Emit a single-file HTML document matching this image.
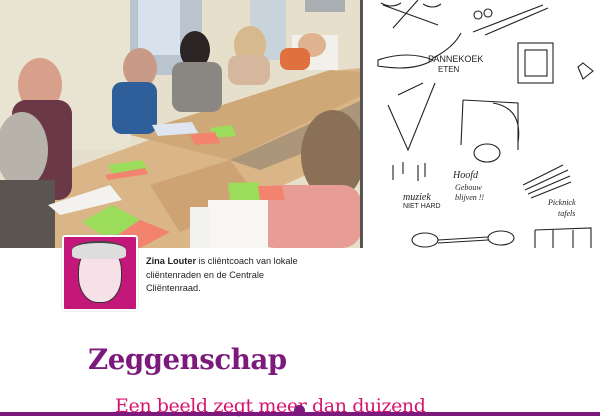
<!DOCTYPE html>
<html><head><meta charset="utf-8"><style>
body{margin:0;width:600px;height:416px;overflow:hidden;background:#fff;position:relative;font-family:"Liberation Sans",sans-serif}
.a{position:absolute}
</style></head><body>
<svg class="a" style="left:0;top:0" width="362" height="248" viewBox="0 0 362 248">
<rect width="362" height="248" fill="#e6dfcb"/>
<rect x="0" y="0" width="130" height="150" fill="#e9e3d2"/>
<rect x="130" y="0" width="72" height="75" fill="#b9c4cf"/>
<rect x="138" y="0" width="42" height="55" fill="#d8e2ec"/>
<rect x="250" y="0" width="36" height="60" fill="#c9d3dc"/>
<rect x="305" y="0" width="40" height="12" fill="#a9aeb2"/>
<rect x="292" y="35" width="46" height="35" fill="#f2f0ea"/>
<polygon points="40,180 340,70 362,68 362,150 250,200 190,248 45,248" fill="#d9b587"/>
<polygon points="130,135 330,70 362,72 362,95 230,160" fill="#cfa878"/>
<polygon points="150,185 230,160 260,200 180,232" fill="#cda373"/>
<polygon points="230,160 362,100 362,130 260,170" fill="#5a5c5e" opacity=".35"/>
<ellipse cx="40" cy="85" rx="22" ry="27" fill="#d7a08a"/>
<rect x="12" y="100" width="60" height="100" rx="14" fill="#6b3848"/>
<ellipse cx="140" cy="68" rx="17" ry="20" fill="#c99a86"/>
<rect x="112" y="82" width="45" height="52" rx="10" fill="#2e5f9a"/>
<ellipse cx="195" cy="50" rx="15" ry="19" fill="#2b2424"/>
<rect x="172" y="62" width="50" height="50" rx="10" fill="#8a8682"/>
<ellipse cx="250" cy="45" rx="16" ry="19" fill="#d6b98c"/>
<rect x="228" y="55" width="42" height="30" rx="10" fill="#d4b79d"/>
<ellipse cx="312" cy="45" rx="14" ry="12" fill="#e0b390"/>
<rect x="280" y="48" width="30" height="22" rx="8" fill="#e0703e"/>
<ellipse cx="22" cy="150" rx="26" ry="38" fill="#b8b3aa"/>
<rect x="0" y="180" width="55" height="68" fill="#5a5550"/>
<ellipse cx="333" cy="155" rx="32" ry="45" fill="#8a7155"/>
<rect x="255" y="185" width="107" height="63" rx="20" fill="#e89c96"/>
<polygon points="108,165 142,160 148,170 114,176" fill="#9bdc5b"/>
<polygon points="105,175 145,168 148,174 108,180" fill="#f3826e"/>
<polygon points="82,222 112,205 140,220 110,240" fill="#9bdc5b"/>
<polygon points="110,240 140,220 170,232 140,248" fill="#f3826e"/>
<polygon points="228,183 258,182 260,200 230,201" fill="#9bdc5b"/>
<polygon points="258,186 282,186 285,200 260,200" fill="#f3826e"/>
<polygon points="210,128 232,125 236,136 214,138" fill="#9bdc5b"/>
<polygon points="190,135 215,132 220,143 195,145" fill="#f3826e"/>
<polygon points="48,205 110,185 122,200 60,215" fill="#f4f2ee"/>
<polygon points="152,125 192,122 198,133 158,136" fill="#dfe6f2"/>
<rect x="208" y="200" width="60" height="48" fill="#f7f6f2"/>
<rect x="190" y="207" width="20" height="41" fill="#f1f1ee"/>
</svg>
<div class="a" style="left:360px;top:0;width:3px;height:248px;background:#5a5555"></div>
<svg class="a" style="left:363px;top:0" width="237" height="248" viewBox="0 0 237 248" fill="none" stroke="#222" stroke-width="1.1">
<path d="M20 5 L75 25 M55 0 L30 28 M18 3 q10 6 20 0 M60 4 q10 6 18 0"/>
<path d="M110 32 L180 5 M122 35 L185 8"/>
<circle cx="115" cy="15" r="4"/><circle cx="125" cy="13" r="4"/>
<path d="M15 60 q30 -10 55 0 q-20 12 -55 6 z M70 58 q20 -10 28 -25"/>
<text x="65" y="62" font-size="9" fill="#222" stroke="none" font-family="Liberation Sans">PANNEKOEK</text>
<text x="75" y="72" font-size="8" fill="#222" stroke="none" font-family="Liberation Sans">ETEN</text>
<rect x="155" y="43" width="35" height="40"/><rect x="162" y="50" width="22" height="26"/>
<path d="M220 63 l10 8 -10 8 -5 -12z"/>
<path d="M25 105 L45 150 L72 83 M35 95 l25 -12"/>
<path d="M100 100 L155 103 L155 150 M100 100 L98 145 M130 103 q30 5 25 40"/>
<ellipse cx="124" cy="153" rx="13" ry="9"/>
<path d="M30 165 l0 15 M40 162 l0 12 M55 165 l0 16 M62 163 l0 14"/>
<text x="40" y="200" font-size="10" fill="#222" stroke="none" font-family="Liberation Serif" font-style="italic">muziek</text>
<text x="40" y="208" font-size="7" fill="#222" stroke="none">NIET HARD</text>
<text x="90" y="178" font-size="10" fill="#222" stroke="none" font-family="Liberation Serif" font-style="italic">Hoofd</text>
<text x="92" y="190" font-size="8" fill="#222" stroke="none" font-family="Liberation Serif" font-style="italic">Gebouw</text>
<text x="92" y="200" font-size="8" fill="#222" stroke="none" font-family="Liberation Serif" font-style="italic">blijven !!</text>
<path d="M160 185 L200 165 M162 190 L205 170 M165 194 L207 176 M168 198 L208 182"/>
<text x="185" y="205" font-size="8" fill="#222" stroke="none" font-family="Liberation Serif" font-style="italic">Picknick</text>
<text x="195" y="216" font-size="8" fill="#222" stroke="none" font-family="Liberation Serif" font-style="italic">tafels</text>
<ellipse cx="62" cy="240" rx="13" ry="7"/><ellipse cx="138" cy="238" rx="13" ry="7"/>
<path d="M75 240 L125 237 M75 243 L125 240"/>
<path d="M172 230 L228 228 L228 248 M172 230 L172 248 M190 230 L190 248 M210 230 L210 248"/>
</svg>
<div class="a" style="left:62px;top:235px;width:72px;height:72px;background:#c4177a;border:2px solid #fff;border-radius:3px;box-shadow:0 0 1px #999;overflow:hidden">
<div class="a" style="left:14px;top:8px;width:42px;height:56px;border-radius:45%;background:#f6e1e8;border:1px solid #333"></div>
<div class="a" style="left:8px;top:4px;width:54px;height:16px;border-radius:50% 50% 20% 20%;background:#ddd;border-top:2px solid #444"></div>
</div>
<div class="a" style="left:146px;top:255px;width:160px;font-size:9.2px;line-height:13.5px;color:#222">
<b>Zina Louter</b> is cliëntcoach van lokale cliëntenraden en de Centrale Cliëntenraad.</div>
<div class="a" style="left:88px;top:343px;font-family:'DejaVu Serif',serif;font-weight:bold;font-size:27.7px;color:#7b1a7c;letter-spacing:-0.5px">Zeggenschap</div>
<div class="a" style="left:115px;top:395px;font-family:'DejaVu Serif',serif;font-size:19px;color:#d6146e;letter-spacing:-0.4px;white-space:nowrap">Een beeld zegt meer dan duizend</div>
<div class="a" style="left:0;top:412px;width:600px;height:4px;background:#7b1a7c"></div>
<div class="a" style="left:294px;top:405px;width:11px;height:11px;border-radius:50%;background:#7b1a7c"></div>
</body></html>
